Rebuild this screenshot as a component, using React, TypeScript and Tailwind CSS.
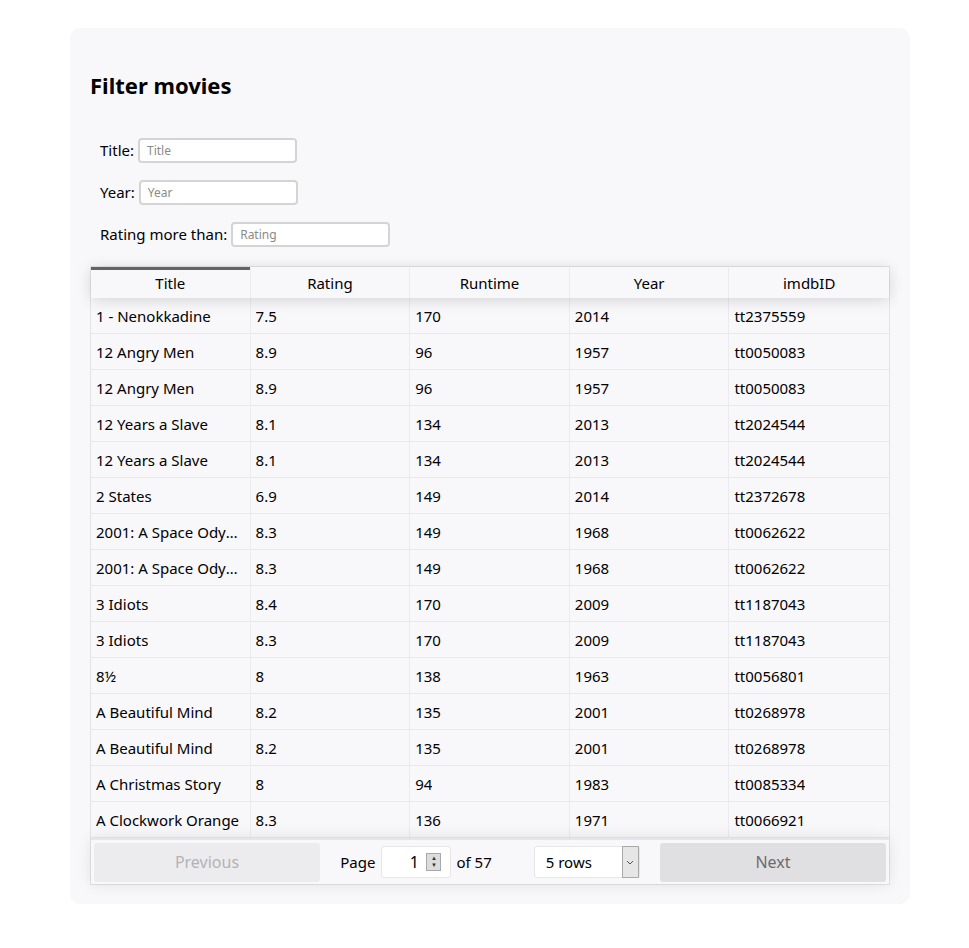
import React from "react"

const rows = [
  ["1 - Nenokkadine", "7.5", "170", "2014", "tt2375559"],
  ["12 Angry Men", "8.9", "96", "1957", "tt0050083"],
  ["12 Angry Men", "8.9", "96", "1957", "tt0050083"],
  ["12 Years a Slave", "8.1", "134", "2013", "tt2024544"],
  ["12 Years a Slave", "8.1", "134", "2013", "tt2024544"],
  ["2 States", "6.9", "149", "2014", "tt2372678"],
  ["2001: A Space Odyssey", "8.3", "149", "1968", "tt0062622"],
  ["2001: A Space Odyssey", "8.3", "149", "1968", "tt0062622"],
  ["3 Idiots", "8.4", "170", "2009", "tt1187043"],
  ["3 Idiots", "8.3", "170", "2009", "tt1187043"],
  ["8½", "8", "138", "1963", "tt0056801"],
  ["A Beautiful Mind", "8.2", "135", "2001", "tt0268978"],
  ["A Beautiful Mind", "8.2", "135", "2001", "tt0268978"],
  ["A Christmas Story", "8", "94", "1983", "tt0085334"],
  ["A Clockwork Orange", "8.3", "136", "1971", "tt0066921"],
]

const headers = ["Title", "Rating", "Runtime", "Year", "imdbID"]

function Field({ label, placeholder }: { label: string; placeholder: string }) {
  return (
    <div className="flex items-center gap-[4px] h-[25px]">
      <span className="text-[15px] text-black">{label}</span>
      <input
        placeholder={placeholder}
        className="w-[159px] h-[25px] rounded-[4px] border-2 border-[#d4d4d4] bg-white px-[7px] text-[12px] placeholder:text-[#8a8a8a] outline-none"
      />
    </div>
  )
}

export default function App() {
  return (
    <div className="min-h-[948px] bg-white pt-[28px] font-['Noto_Sans','Open_Sans',sans-serif]">
      <div className="ml-[70px] w-[840px] h-[876px] rounded-[10px] bg-[#f8f7fa] px-[20px] pt-[43px]">
        <h2 className="text-[22px] font-bold leading-[28px] text-black">Filter movies</h2>

        <div className="mt-[39px] ml-[10px] flex flex-col gap-[17px]">
          <Field label="Title:" placeholder="Title" />
          <Field label="Year:" placeholder="Year" />
          <Field label="Rating more than:" placeholder="Rating" />
        </div>

        <div className="mt-[19px] w-[800px] border border-[#e3e2e6] text-[15px] text-black">
          <div className="relative z-10 grid grid-cols-5 h-[31px] pt-[1px] shadow-[0_2px_15px_0_rgba(0,0,0,0.15)] bg-[#f8f7fa]">
            {headers.map((h, i) => (
              <div
                key={h}
                className={
                  i === 0
                    ? "flex items-center justify-center border-r border-[#ebeaee] shadow-[inset_0_3px_0_0_rgba(0,0,0,0.6)] -mt-[1px] pt-[1px]"
                    : i === 4
                    ? "flex items-center justify-center"
                    : "flex items-center justify-center border-r border-[#ebeaee]"
                }
              >
                {h}
              </div>
            ))}
          </div>
          <div>
            {rows.map((r, ri) => (
              <div key={ri} className="grid grid-cols-5 h-[36px] border-b border-[#e8e7eb]">
                {r.map((c, ci) => (
                  <div
                    key={ci}
                    className={
                      ci === 4
                        ? "flex items-center px-[5px] pt-[1px] overflow-hidden"
                        : "flex items-center px-[5px] pt-[1px] border-r border-[#ebeaee] overflow-hidden"
                    }
                  >
                    <span className="truncate">{c}</span>
                  </div>
                ))}
              </div>
            ))}
          </div>
          <div className="relative flex items-center h-[46px] px-[3px] shadow-[0_0_15px_0_rgba(0,0,0,0.1)] border-t-2 border-[#e6e5e9]">
            <button className="w-[226px] h-[39px] rounded-[3px] bg-[#ecebee] text-[16px] text-[#b3b3b3]">Previous</button>
            <div className="flex-1 flex items-center justify-center">
              <span className="text-[15px] mr-[6px]">Page</span>
              <div className="flex items-center w-[70px] h-[32px] bg-white border border-[#e6e5e9] rounded-[3px] pl-[20px]">
                <span className="flex-1 text-center text-[16px]">1</span>
                <span className="mr-[9px] flex flex-col items-center justify-center w-[15px] h-[18px] bg-[#dcdcdc] border border-[#a9a9a9] text-[6px] leading-[7px] text-[#333]">
                  <span>▲</span>
                  <span>▼</span>
                </span>
              </div>
              <span className="ml-[5px] text-[15px]">of 57</span>
              <div className="ml-[42px] flex items-center w-[106px] h-[32px] bg-white border border-[#e6e5e9] rounded-[3px]">
                <span className="flex-1 pl-[11px] text-[15px]">5 rows</span>
                <span className="flex items-center justify-center w-[17px] h-[32px] border border-[#a9a9a9] bg-[#e6e6e6]">
                  <svg width="8" height="5" viewBox="0 0 8 5">
                    <path d="M1 1l3 3 3-3" fill="none" stroke="#555" strokeWidth="1" />
                  </svg>
                </span>
              </div>
            </div>
            <button className="w-[226px] h-[39px] rounded-[3px] bg-[#e0dfe1] text-[16px] text-[#6c6c6c]">Next</button>
          </div>
        </div>
      </div>
    </div>
  )
}
